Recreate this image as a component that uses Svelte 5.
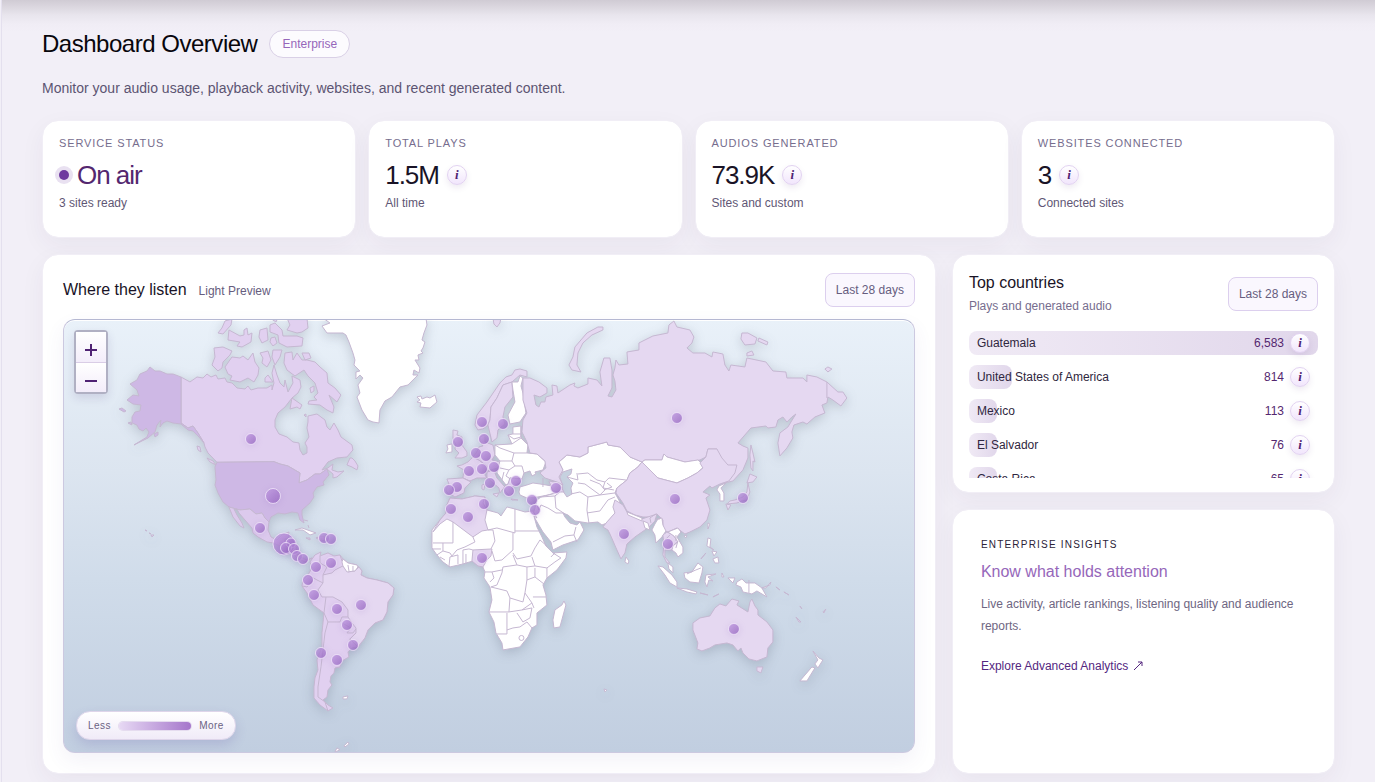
<script lang="ts">
	type Stat = { label: string; value: string; note: string; live?: boolean };
	type Country = { name: string; plays: number };

	const stats: Stat[] = [
		{ label: 'Service status', value: 'On air', note: '3 sites ready', live: true },
		{ label: 'Total plays', value: '1.5M', note: 'All time' },
		{ label: 'Audios generated', value: '73.9K', note: 'Sites and custom' },
		{ label: 'Websites connected', value: '3', note: 'Connected sites' }
	];

	const countries: Country[] = [
		{ name: 'Guatemala', plays: 6583 },
		{ name: 'United States of America', plays: 814 },
		{ name: 'Mexico', plays: 113 },
		{ name: 'El Salvador', plays: 76 },
		{ name: 'Costa Rica', plays: 65 }
	];
	const maxPlays = Math.max(...countries.map((c) => c.plays));

	// bars never get narrower than 8% so they stay visible
	function barWidth(plays: number) {
		return Math.max(8, (plays / maxPlays) * 100);
	}

	// land shapes, t = tone: none | low | mid | soft | high
	const land: { t: string; d: string }[] = [
		// Greenland, Iceland
		{ t: 'none', d: 'M322 326L330 323L323 318H426L427 325L424 333L422 340L425 342L423 348L421 351L423 353L418 355L419 360L415 360L420 368L419 373L414 370L413 375L418 375L408 385L400 387L392 397L385 401L380 410L379 423L373 422L368 420L362 410L357 397L360 393L358 385L363 378L360 375L356 379L356 372L360 371L354 365L355 360L353 353L349 342L346 335L343 333H327Z' },
		{ t: 'none', d: 'M417 397L421 396L422 399L427 397L430 398L435 395L437 402L430 408L420 407L421 403L417 402L420 400Z' },
		// Canada
		{ t: 'mid', d: 'M181 377L190 382L197 377L203 378L207 374L211 377L216 375L218 379L225 378L227 382L232 383L237 388L245 389L248 386L251 390L258 388L267 388L272 385L272 390L274 383L272 373L274 365L277 375L280 383L284 387L285 380L288 392L293 383L292 376L300 380L301 387L298 393L292 398L285 407L278 413L275 420V427L279 434L287 437L293 442L299 443L300 450L303 455L307 453V447L305 443L309 437L307 428L308 422V416L317 414L325 420L327 427L330 430L334 423L338 430L341 437L352 445L353 450L347 457L337 458L328 462L322 470L328 468L333 464L332 470L338 472L344 471L337 477L333 478V474L327 469L320 474H315L307 480L299 483L300 473L288 466L280 464L274 461.7L217 462.3L208 453L205 447L204 443L198 433L193 426L188 428L181 423Z' },
		{ t: 'mid', d: 'M350 458L347 465L352 467L357 470L358 466L355 461L352 458Z' },
		{ t: 'mid', d: 'M225 321L232 319L231 325L223 334L218 333L222 328Z' },
		{ t: 'mid', d: 'M229 330L240 336L244 335L244 330L247 328L248 335L252 333L251 342L242 347L237 346L240 342L228 340Z' },
		{ t: 'mid', d: 'M260 330L267 328L268 340L262 343L259 337Z' },
		{ t: 'mid', d: 'M270 325L275 323L282 330L283 336H297L303 338L302 346L287 347L279 343L278 335L270 332Z' },
		{ t: 'mid', d: 'M287 318H307L308 328L302 332L297 333L287 330L290 325ZM271 338L275 337L277 343L273 346L270 342ZM270 318H278L276 322Z' },
		{ t: 'mid', d: 'M214 348L223 347L232 351L230 355L223 362L222 368L218 371L212 365L215 357Z' },
		{ t: 'mid', d: 'M225 367L232 357L240 358L243 356L248 360L253 353L255 362L259 368L258 375L254 382L248 378L240 382L230 380L232 376L228 374Z' },
		{ t: 'mid', d: 'M260 353L268 351L271 360L267 367L262 363L263 358ZM273 350L282 350L280 357L275 365L272 357ZM265 378L268 375L273 382L265 382Z' },
		{ t: 'mid', d: 'M285 353L292 352L293 360L297 353L302 360L307 360L315 362L320 367L327 373L328 383L335 388L341 395L337 402L329 395L334 407L333 413L327 410L320 405L308 404L309 401L317 400L314 397L318 393L315 383L308 376L304 370L295 376L287 370L284 363ZM302 353L309 353L311 358L305 360Z' },
		{ t: 'mid', d: 'M292 398L302 405L300 409L297 407L290 409ZM310 388L314 386V391L311 393ZM304 415L306 414V417ZM197 446L200 447L201 452L198 450ZM207 458L213 461L216 465L210 462Z' },
		// United States
		{ t: 'high', d: 'M150 367L155 371H160L167 374L173 374L181 377V423L188 428L193 426L198 433L204 443L199 437L193 431L188 430L181 424L173 423L167 421L163 423L160 427L161 420L157 425L155 432L148 438L134 445L147 437L149 432L146 428L143 431L139 429L137 425L132 423V417L135 412L140 411L141 405L133 404L127 400L133 395L139 396L137 390L130 384L137 380L140 374L147 371ZM119 409L122 408L126 411L124 412ZM128 423L131 422L132 425ZM154 434L158 432L158 435L155 437Z' },
		{ t: 'high', d: 'M217 462.3L274 461.7L280 464L288 466L300 473L299 483L307 480L315 474H320L327 469L329 475L323 482L324 485L317 487L313 493L314 497L310 503L302 510V515L304 523L300 520L298 513L292 512L285 514L278 513L271 517L269 522L265 518L262 513L256 514L250 509L240 510L229 507L223 502L218 493L215 485L216 480L215 467Z' },
		// Mexico and Central America
		{ t: 'soft', d: 'M229 507L240 510L250 509L256 514L262 513L265 518L269 522L268 530L271 537L277 540L282 535L289 532L288 538L292 543L297 545L296 552L300 557L307 560L312 558L305 562L297 558L292 552L285 548L273 543L267 542L258 537L253 533L252 528L245 520L239 513L237 509L234 509L237 515L242 523L244 528L240 526L233 517Z' },
		{ t: 'none', d: 'M295 530L302 528L316 533L310 535L303 530Z' },
		{ t: 'soft', d: 'M316 538L322 536L328 539L322 541ZM306 538L310 538L310 540ZM304 520L308 521M308 525L309 528' },
		// South America
		{ t: 'mid', d: 'M310 562L315 555L321 552L320 556L328 553L334 556L340 555L343 559L348 563L357 565L362 571L361 575L367 578L377 580L388 583L394 588L393 595L388 602L387 612L383 620L375 623L368 630L365 638L358 647L352 648L348 652L349 657L342 661L340 667L335 668L334 673L331 676L330 682L332 685L328 690L327 697L323 700L328 705L333 708L328 711L320 705L314 698V687L315 678L318 670L317 660L322 647V633L323 623L324 613L313 605L307 593L302 586L303 580L308 575L312 568Z' },
		{ t: 'low', d: 'M343 566L348 572L355 571L359 567L362 571L361 575L367 578L377 580L388 583L394 588L393 595L388 602L387 612L383 620L375 623L368 630L365 638L358 647L350 639L356 633L356 628L352 623L348 617V610L342 602L333 597L326 597L322 597L318 590L323 583V575L332 573L335 570Z' },
		{ t: 'none', d: 'M343 559L348 563L357 565L358 567L355 571L347 572L343 566L342 562Z' },
		{ t: 'none', d: 'M343 697L348 696L347 699H343ZM335 752L337 748L340 750ZM344 746L348 742L349 744L345 747Z' },
		// Nordics and British Isles
		{ t: 'low', d: 'M477 415L487 402L500 383L506 377L512 375L515 370L520 369L527 371L527 377L520 375L512 382L503 385L497 398L491 407L490 420L488 425L483 429L478 430L475 425Z' },
		{ t: 'low', d: 'M491 407L497 398L503 385L512 382L513 397L505 407L503 417L505 424L498 430L497 438L492 442L488 425L490 420Z' },
		{ t: 'none', d: 'M512 382L518 382L520 376L523 378L521 386L523 393L526 413L520 422L510 424L508 415L515 402L513 390Z' },
		{ t: 'low', d: 'M453 430L458 431L457 435L462 437L462 445L467 452V456L462 458L455 458L459 453L455 449L456 445L453 438Z' },
		{ t: 'none', d: 'M447 445L452 444V452L446 453L448 449Z' },
		// Western and southern Europe
		{ t: 'low', d: 'M462 465L468 462L473 457L479 460L487 466L485 475L487 478L477 478L470 481L463 478L464 470L457 466Z' },
		{ t: 'low', d: 'M447 479L463 478L471 482L465 488L464 493L455 497L452 495L448 494L446 490L449 484Z' },
		{ t: 'low', d: 'M479 447L483 446L480 441V437L485 435V442L493 445L495 455L492 460L500 462L498 468L490 470L487 471L487 466L479 460L473 457L477 452Z' },
		{ t: 'low', d: 'M487 472L495 470V473L497 478L505 487L503 489L500 493L499 488L492 482L487 477ZM493 494L499 493L497 497ZM482 485L485 484L484 490L482 489Z' },
		{ t: 'none', d: 'M495 445L512 444L508 435L513 434L513 427L521 426V437L528 445L527 453L537 454L546 462L543 470L535 472L536 474L532 476L530 471L524 473L522 479L510 478L509 484L506 485L497 473L498 468L500 461L495 455Z' },
		{ t: 'low', d: 'M510 478L522 479L520 483L512 487L514 492L510 497L506 492L504 487L508 484ZM511 499L518 500H512Z' },
		{ t: 'none', d: 'M519 492L520 487L527 485L533 483L540 484L552 486L560 492L548 495L538 497L527 498L520 495Z' },
		// Middle East and Central Asia
		{ t: 'none', d: 'M559 462L567 455L580 457L588 453V447L607 442L608 445L620 447L630 457L642 462L638 467L630 473L627 480L617 488L615 493L620 502L615 513L607 523L602 525L598 522L588 523L575 521L568 515L563 513L565 517L570 523L577 525L580 522L584 530L578 540L563 545L553 550L551 542L543 532L533 515L535 508L537 500L541 497L560 492L555 487L559 477L563 470Z' },
		{ t: 'sea', d: 'M560 477L563 472L572 469L571 474L567 477L573 483L571 488L572 494L567 497L563 491L562 484Z' },
		{ t: 'low', d: 'M549 481L559 483L564 492L560 492L553 491L551 486Z' },
		// Russia
		{ t: 'low', d: 'M523 378L530 378L539 382L547 388V393L540 397L534 395L536 405L539 407L541 402L545 402L546 397L553 395L552 385L557 386L558 393L570 385L575 383L574 386L578 388L588 384L588 378L597 380L602 386L600 372L604 358L610 358L612 370V388L608 396L612 397L616 390L615 381L613 375L615 368L616 360L619 365L628 364L627 352L639 350L639 343L653 336L668 333L669 325L674 321L677 327L690 330L694 337L692 343L687 348L693 353L705 353L712 357L713 352L723 354L725 365L729 371L731 365L745 367L747 358L766 362L773 371L786 372L787 378H803L807 382V375L817 377L827 382L838 392L843 392L847 398L841 406L833 400L828 397L827 403L822 405L825 413L815 417L807 424L803 422L794 425L792 432L793 438L787 448L780 456L778 443L780 433L788 427L796 414L792 417L787 422L783 417L778 420L776 427L768 428L766 426L751 428L738 443L743 446L748 448V458L743 470L733 481L720 484L712 478L717 449L708 449L706 457L700 460L685 462L667 457L664 454L662 460L645 460L642 462L630 457L620 447L608 445L607 442L588 447V453L580 457L567 455L559 462L563 470L559 477L563 485L557 482L545 478L540 473L546 468L545 461L537 454L530 453L527 442L522 432L523 420L527 413L523 400Z' },
		{ t: 'low', d: 'M603 327V330L592 335L583 343L578 353L577 365L581 372L572 370L569 365L573 357L575 347L587 333L598 327ZM742 333L748 333L757 338L755 344L745 345L741 339ZM759 338L768 342L767 345L758 341ZM747 353L752 351L754 355L747 356ZM825 369L828 367L832 369L828 372ZM493 318H501L500 323L497 327L494 324Z' },
		{ t: 'low', d: 'M751 445L753 453L755 462L753 461L753 471L751 468L750 455Z' },
		// Mongolia, China, Korea, Japan
		{ t: 'none', d: 'M642 462L645 460L662 460L664 454L667 457L685 462L698 460L705 466L697 473L688 478L677 483L658 478L648 468Z' },
		{ t: 'low', d: 'M642 462L648 468L658 478L677 483L688 478L697 473L703 468L700 463L706 457L708 449H717L722 458L728 465H737L735 473L729 481L720 484L712 488L710 486L703 492L710 495L706 498L710 510L707 520L700 527L690 532L685 534L677 528L668 532L663 530V520L657 514L652 517H643L635 515L627 511L623 503L616 493L617 488L627 480L630 473L638 467Z' },
		{ t: 'none', d: 'M726 483L721 488L724 493V501L720 501V494L717 490L719 486ZM708 523L710 524L708 529ZM684 536L687 535L686 538Z' },
		{ t: 'low', d: 'M750 474L757 477L753 482L747 483ZM748 483L750 492L747 500L742 501L737 503L727 504L730 501L735 500L743 497L747 492ZM726 504L731 505L728 510Z' },
		// South and Southeast Asia
		{ t: 'low', d: 'M615 500L623 505L627 512L642 519L657 514L655 521L649 527L645 530L635 537L627 544L625 553L621 559L617 550L610 534L608 530L603 527L607 522L615 513L613 507Z' },
		{ t: 'none', d: 'M627 512L642 518V521L628 515ZM643 521L648 523L650 530L645 528ZM626 557L629 561L628 564L625 562Z' },
		{ t: 'none', d: 'M662 518L663 525L666 531L662 537L656 543L655 535L652 530L655 524L658 519Z' },
		{ t: 'low', d: 'M663 535L667 532L673 535L678 541L673 546L672 550H665V557L670 563L667 563L663 555L664 545Z' },
		{ t: 'none', d: 'M668 532L678 528L681 532L677 537L683 547V553L678 557L676 553L672 550L673 546L678 542L674 536ZM668 563L673 567V573L669 569Z' },
		{ t: 'none', d: 'M658 566L663 567L672 575L677 582V587L670 583L665 575ZM677 588L687 589L697 592L696 594L687 592ZM684 573L692 572L698 563L703 567L702 573L699 583L690 582L685 578Z' },
		{ t: 'none', d: 'M706 575L716 574L708 577L713 581L709 580L707 587L705 582ZM708 538L711 539L710 547L714 550L707 546ZM713 559L718 557L719 563L715 563ZM712 551L717 552L714 556ZM701 559L706 553ZM700 593L708 595ZM713 597L719 594ZM722 573L724 577L722 577Z' },
		{ t: 'none', d: 'M737 582L742 579L746 583L755 583L762 588L767 597L757 591L752 594L743 592L741 587L736 585ZM728 578L735 578L733 583ZM762 588L770 585L771 582L766 588Z' },
		{ t: 'low', d: 'M776 587L780 590ZM784 592L789 595ZM800 606L802 609ZM823 612L826 609L824 613ZM796 617L801 622L799 622ZM145 530L147 531ZM149 533L151 534ZM151 535L154 535L152 537Z' },
		// Oceania
		{ t: 'low', d: 'M693 623L700 618L710 616L715 608L720 604L726 606L732 599L739 601L737 605L748 612L750 602L752 599L755 606L758 610V615L767 622L773 630V642L768 648L767 657L757 661L749 659L743 653L741 648L738 651L733 645L727 643L715 645L710 648L702 651L697 649L698 643L693 630ZM757 667H763L761 673L757 671Z' },
		{ t: 'none', d: 'M813 651L819 658L823 660L818 668L815 664L818 660ZM812 667L815 668L807 681L800 681ZM604 689L607 690L605 692Z' },
		// Africa
		{ t: 'none', d: 'M450 498L462 499L475 496L485 497L487 510L498 513L501 516L507 507L515 509L525 512L533 511L537 518L534 516L537 527L542 537L546 546L553 553L567 552L566 558L557 570L547 578L543 585L546 595L547 605L537 613V625L532 628L528 637L520 647L503 650L502 643L496 633L494 622L489 612L492 600L490 587L484 578L485 572L483 567L478 566L473 561L463 564L450 567L443 562L437 555L432 548V530L440 520L446 513L447 505ZM564 601L566 605L560 627L554 628L553 620L555 610L562 605Z' },
		{ t: 'low', d: 'M450 498L462 499L475 496L485 497L483 503L487 510L485 520L488 530L482 531L473 537L453 522L447 519L440 524L433 532L440 520L446 513L447 505Z' },
		{ t: 'low', d: 'M473 550L492 549L491 556L487 560L483 567L478 566L472 561Z' }
	];

	const borders = [
		'M324 613L328 622L325 633L323 650L321 667L318 687V697L325 702L328 711M324 613L326 597M328 622L340 622L342 617L348 617M342 623L351 628L347 633L353 633L356 629M356 633L350 639V648',
		'M323 583L317 580L308 575M323 575L327 567L320 563V556M302 586L307 587L313 580M348 565L349 571M353 566V571M340 555L342 561',
		'M285 545V539H289M288 546L296 546M296 555L300 554M321 536V541',
		'M433 543H453V522M473 537L475 542L465 547L457 550L452 556M488 530L493 530L495 541L491 549M515 509V533L497 528L488 530M515 531H539M513 533V550L502 560L495 561L492 551',
		'M513 553L517 559L531 556L535 548L540 540M513 555L517 565L527 567L535 566L532 557M535 566L547 568L555 562L561 558L553 553M535 568V577L544 584M547 568L547 578',
		'M491 587L497 585L502 573L503 567L517 565M527 567V580L525 593L523 602L510 598L507 591L491 587M485 572L492 572L502 570M492 572L494 578L490 582M510 598L509 612L489 612M509 612L522 610L532 603L525 593M527 580L535 577M533 597H546M532 603L534 608',
		'M507 613V634L497 634M507 630L513 628L520 627L527 622L532 628M522 610L532 608L530 618L523 622L517 613M524 638A2.500 2.500 0 1 1 519 638A2.500 2.500 0 1 1 524 638M540 540L547 546M555 553L551 557',
		'M432 549L441 549M437 555L443 551L450 553L452 556M443 551V543M449 567L450 557L458 555V564M463 564V550L469 549L473 550M466 564V554M440 557L445 560',
		'M495 445L500 448L514 453L512 461L500 461M512 444L521 438L528 445M513 434H521M508 435L514 439L521 437M514 453H527M500 468L509 470L515 466L512 461M509 470L506 476L512 480M515 466L522 466L524 473M504 472L502 480M521 437V426',
		'M577 473L578 480L567 477M578 474L588 473L597 480L605 482L609 478L626 480M578 483L585 484L600 495L605 490L600 484L590 480M605 482L603 488L614 490M571 494L580 492L588 497L600 495L615 493M588 497L587 510L589 523M587 513L600 511L608 500L615 497M541 497L555 496L560 492M555 496L556 508L565 514M541 505L548 508L556 513L563 513M541 505L539 510L537 505M553 542L565 536L574 535L576 527M574 535L577 542M604 490L612 487L607 483',
		'M665 540L670 535M678 541L676 548M676 541V535M687 574L696 570L701 568M749 580V593M827 382V398M543 487V478',
		'M656 514L650 518L651 523M660 519L655 519'
	];

	// [x, y, radius]
	const markers: number[][] = [
		[251, 439, 5.5], [273, 496, 7.5], [260, 528, 5.5], [284, 544, 11], [291, 543, 5], [286, 548, 5.5],
		[294, 549, 5.5], [297, 556, 5.5], [303, 559, 5.5], [324, 538, 5.5], [331, 539, 5.5], [331, 563, 5.5],
		[316, 567, 5.5], [308, 580, 5.5], [314, 595, 5.5], [337, 609, 5.5], [361, 605, 5.5], [347, 625, 5.5],
		[353, 645, 5.5], [321, 653, 5.5], [337, 660, 5.5], [482, 422, 5.5], [503, 424, 5.5], [484, 439, 5.5],
		[458, 442, 5.5], [476, 453, 5.5], [486, 456, 5.5], [469, 471, 5.5], [482, 469, 5.5], [494, 467, 5.5],
		[490, 483, 5.5], [457, 487, 5.5], [449, 490, 5.5], [516, 481, 5.5], [509, 491, 5.5], [451, 509, 5.5],
		[484, 504, 5.5], [468, 517, 5.5], [482, 558, 5.5], [556, 488, 5.5], [532, 500, 5.5], [535, 510, 5.5],
		[677, 418, 5.5], [675, 499, 5.5], [743, 498, 5.5], [624, 534, 5.5], [668, 544, 5.5], [734, 629, 5.5]
	];
</script>

<main class="page">
	<header class="page-head">
		<div class="title-row">
			<h1>Dashboard Overview</h1>
			<span class="plan">Enterprise</span>
		</div>
		<p>Monitor your audio usage, playback activity, websites, and recent generated content.</p>
	</header>

	<section class="stats" aria-label="Summary">
		{#each stats as stat (stat.label)}
			<article class="card stat">
				<h2>{stat.label}</h2>
				<div class="stat-value" class:live={stat.live}>
					{#if stat.live}<span class="dot"></span>{/if}
					<strong>{stat.value}</strong>
					{#if !stat.live}
						<button class="info" type="button" aria-label="About {stat.label}">i</button>
					{/if}
				</div>
				<p>{stat.note}</p>
			</article>
		{/each}
	</section>

	<div class="columns">
		<section class="card listen">
			<div class="card-head">
				<div class="heading">
					<h2>Where they listen</h2>
					<span>Light Preview</span>
				</div>
				<button class="range" type="button">Last 28 days</button>
			</div>

			<div class="map">
				<svg viewBox="64 320 850 432" role="img" aria-label="World map of plays">
					<defs>
						<linearGradient id="marker" x1="0" y1="0" x2="1" y2="1">
							<stop offset="0" stop-color="#c09ae1" />
							<stop offset="1" stop-color="#9262bd" />
						</linearGradient>
					</defs>
					<g class="land">
						{#each land as shape}
							<path class={shape.t} d={shape.d} />
						{/each}
						{#each borders as d}
							<path class="border" {d} />
						{/each}
					</g>
					<g class="markers">
						{#each markers as [cx, cy, r]}
							<circle {cx} {cy} {r} />
						{/each}
					</g>
				</svg>
				<div class="zoom">
					<button type="button" aria-label="Zoom in">
						<svg width="14" height="14" viewBox="0 0 14 14"><path d="M7 1v12M1 7h12" /></svg>
					</button>
					<button type="button" aria-label="Zoom out">
						<svg width="14" height="14" viewBox="0 0 14 14"><path d="M1 7h12" /></svg>
					</button>
				</div>
				<div class="legend">
					<span>Less</span>
					<i class="scale"></i>
					<span>More</span>
				</div>
			</div>
		</section>

		<div class="side">
			<section class="card top">
				<div class="card-head">
					<div>
						<h2>Top countries</h2>
						<p>Plays and generated audio</p>
					</div>
					<button class="range" type="button">Last 28 days</button>
				</div>
				<ul>
					{#each countries as country (country.name)}
						<li>
							<span class="bar" style={`width: ${barWidth(country.plays)}%`}></span>
							<span class="name">{country.name}</span>
							<span class="plays">{country.plays.toLocaleString('en-US')}</span>
							<button class="info" type="button" aria-label="Details for {country.name}">i</button>
						</li>
					{/each}
				</ul>
			</section>

			<section class="card insights">
				<h3>Enterprise insights</h3>
				<h2>Know what holds attention</h2>
				<p>Live activity, article rankings, listening quality and audience reports.</p>
				<a href="#analytics">
					Explore Advanced Analytics
					<svg width="10" height="10" viewBox="0 0 10 10" aria-hidden="true">
						<path d="M1 9L9 1M5 1h4v4" />
					</svg>
				</a>
			</section>
		</div>
	</div>
</main>

<style>
	:global(body) {
		margin: 0;
		background: #f2eff7;
	}

	.page {
		box-sizing: border-box;
		min-height: 100vh;
		margin-left: 1px;
		padding: 30px 40px 8px;
		border-left: 1px solid #e4e0ee;
		background: linear-gradient(#d0cbd4, #dbd7df 7px, #e8e5ed 15px, #f0edf5 24px, #f2eff7 32px);
		color: #191326;
		font-family: 'Liberation Sans', Arial, sans-serif;
		font-size: 12px;
	}

	h1,
	h2,
	h3,
	p,
	ul {
		margin: 0;
		padding: 0;
		font-weight: 400;
	}

	button {
		font-family: inherit;
		cursor: pointer;
	}

	.title-row {
		display: flex;
		align-items: center;
		gap: 12px;
	}

	h1 {
		color: #08060c;
		font-size: 24px;
		line-height: 28px;
		letter-spacing: -0.02em;
	}

	.plan {
		padding: 0 12px;
		border: 1px solid #d9d0e6;
		border-radius: 14px;
		background: #fcfbfe;
		color: #9667ba;
		line-height: 26px;
	}

	.page-head p {
		margin-top: 20px;
		color: #5c5472;
		font-size: 14px;
		line-height: 20px;
	}

	.card {
		box-sizing: border-box;
		border: 1px solid #f1eef6;
		border-radius: 16px;
		background: #fff;
		background-clip: padding-box;
		box-shadow: 0 8px 24px rgba(50, 40, 80, 0.05);
	}

	.stats {
		display: grid;
		grid-template-columns: repeat(4, 1fr);
		gap: 12px;
		margin-top: 22px;
	}

	.stat {
		min-height: 118px;
		padding: 16px;
	}

	.stat h2 {
		color: #766d8e;
		font-size: 11px;
		line-height: 13px;
		letter-spacing: 0.08em;
		text-transform: uppercase;
	}

	.stat-value {
		display: flex;
		align-items: center;
		gap: 8px;
		margin-top: 9px;
	}

	.stat-value strong {
		font-size: 26px;
		font-weight: 400;
		line-height: 32px;
		letter-spacing: -0.04em;
	}

	.stat-value.live {
		color: #54276f;
	}

	.dot {
		width: 10px;
		height: 10px;
		border-radius: 50%;
		background: #6f3a9f;
		box-shadow: 0 0 0 4px #e9e1f1;
	}

	.stat p {
		margin-top: 4px;
		color: #5f5775;
		line-height: 16px;
	}

	.info {
		box-sizing: border-box;
		width: 20px;
		height: 20px;
		padding: 0;
		border: 1px solid #e2d2f1;
		border-radius: 50%;
		background: linear-gradient(#fff, #f1e5fc);
		box-shadow: 0 3px 6px rgba(90, 50, 130, 0.1);
		color: #4f2273;
		font: italic 700 13px/16px 'Liberation Serif', serif;
	}

	.columns {
		display: grid;
		grid-template-columns: 7fr 3fr;
		gap: 16px;
		margin-top: 16px;
	}

	.card-head {
		display: flex;
		align-items: center;
		justify-content: space-between;
	}

	.card-head h2 {
		font-size: 16px;
		line-height: 20px;
	}

	.range {
		height: 34px;
		padding: 0 10px;
		border: 1px solid #dccfee;
		border-radius: 8px;
		background: #faf7fe;
		color: #665d7e;
		font-size: 12px;
	}

	.listen {
		padding: 18px 20px 20px;
	}

	.heading {
		display: flex;
		align-items: baseline;
		gap: 12px;
	}

	.heading span {
		color: #665d7e;
	}

	.map {
		position: relative;
		overflow: hidden;
		margin-top: 12px;
		border: 1px solid #ccc9e0;
		border-top-color: #b5b8d2;
		border-radius: 12px;
		background: linear-gradient(#e9f1f9, #dce5f0 35%, #d0dcea 60%, #c1cee0);
		box-shadow:
			0 8px 20px rgba(90, 70, 150, 0.07),
			inset 0 1px #fff;
	}

	.map > svg {
		display: block;
		width: 100%;
		height: auto;
	}

	.land {
		stroke: #c5b7d1;
		stroke-width: 1;
		stroke-linejoin: round;
		filter: drop-shadow(0 3px 6px rgba(60, 70, 90, 0.22));
	}

	.none {
		fill: #fff;
	}

	.low {
		fill: #e5d8f1;
	}

	.mid {
		fill: #e1d0f0;
	}

	.soft {
		fill: #dccaed;
	}

	.high {
		fill: #ceb8e5;
	}

	.sea {
		fill: #c6d1df;
	}

	.border {
		fill: none;
	}

	.markers circle {
		fill: url(#marker);
		fill-opacity: 0.76;
		stroke: #f1e7fa;
		stroke-opacity: 0.8;
		stroke-width: 1;
		filter: drop-shadow(0 1px 3px rgba(140, 90, 190, 0.2));
	}

	.zoom {
		position: absolute;
		top: 10px;
		left: 10px;
		display: grid;
		border: 2px solid #b0b0c3;
		border-radius: 4px;
		box-shadow: 0 4px 10px rgba(70, 50, 120, 0.14);
	}

	.zoom button {
		box-sizing: border-box;
		display: grid;
		place-items: center;
		width: 30px;
		height: 30px;
		padding: 6px 0 0;
		border: none;
		background: linear-gradient(#fff, #f3edfa);
	}

	.zoom button:last-child {
		border-top: 1px solid #d9cde6;
	}

	.zoom path {
		stroke: #4f2273;
		stroke-width: 2;
	}

	.legend {
		position: absolute;
		bottom: 12px;
		left: 12px;
		display: flex;
		align-items: center;
		gap: 8px;
		padding: 1px 11px 0;
		border: 1px solid #ded5ea;
		border-radius: 14px;
		background: linear-gradient(#fff, #f0ebf8);
		box-shadow: 0 5px 12px rgba(90, 70, 160, 0.18);
		color: #6b6282;
		font-size: 10px;
		line-height: 26px;
		letter-spacing: 0.05em;
	}

	.scale {
		width: 72px;
		height: 8px;
		border-radius: 4px;
		background: linear-gradient(90deg, #e7d9f4, #a576cb);
		box-shadow: 0 0 0 1px #e5dcef;
	}

	.side {
		display: flex;
		flex-direction: column;
		gap: 16px;
	}

	.top {
		padding: 18px 16px 14px;
	}

	.top p {
		margin-top: 5px;
		color: #766d8e;
		line-height: 16px;
	}

	.top ul {
		display: grid;
		gap: 10px;
		height: 147px;
		margin-top: 17px;
		overflow: hidden;
		list-style: none;
	}

	.top li {
		position: relative;
		display: flex;
		align-items: center;
		gap: 6px;
		height: 24px;
		padding: 0 8px;
	}

	.bar {
		position: absolute;
		inset: 0 auto 0 0;
		border-radius: 8px;
		background: linear-gradient(90deg, #f0eaf5, #e1d7eb);
	}

	.name {
		position: relative;
		flex: 1;
		color: #2f2740;
	}

	.plays {
		position: relative;
		color: #54276f;
	}

	.top .info {
		position: relative;
	}

	.insights {
		flex: 1;
		padding: 28px;
	}

	.insights h3 {
		color: #2b2338;
		font-size: 10px;
		line-height: 14px;
		letter-spacing: 0.12em;
		text-transform: uppercase;
	}

	.insights h2 {
		margin-top: 10px;
		color: #9667ba;
		font-size: 16px;
		line-height: 20px;
	}

	.insights p {
		margin-top: 11px;
		color: #6e6682;
		line-height: 22px;
	}

	.insights a {
		display: inline-flex;
		align-items: center;
		gap: 5px;
		margin-top: 20px;
		color: #54277f;
		line-height: 18px;
		text-decoration: none;
	}

	.insights a path {
		fill: none;
		stroke: currentColor;
	}
</style>
